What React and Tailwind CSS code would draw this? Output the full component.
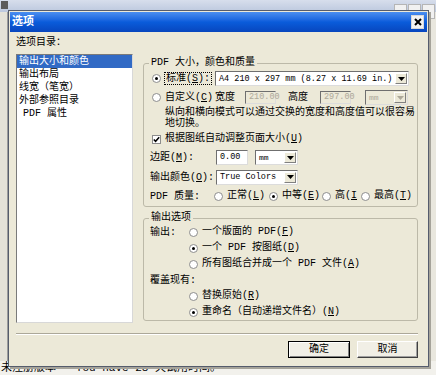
const FONT = "font-[family-name:'Liberation_Mono','Noto_Sans_CJK_SC',monospace]"

function Radio({ checked }) {
  return (
    <span className="flex h-[9px] w-[9px] shrink-0 items-center justify-center rounded-full border border-[#8d8d8d] bg-white">
      {checked && <span className="h-[3px] w-[3px] rounded-full bg-black" />}
    </span>
  )
}

function DropButton({ disabled }) {
  return (
    <span className="flex h-[11px] w-[12px] items-center justify-center border border-l-white border-t-white border-r-[#808080] border-b-[#808080] bg-[#ece9d8]">
      <svg width="7" height="4" viewBox="0 0 7 4">
        <polygon points="0,0 7,0 3.5,4" fill={disabled ? '#aca899' : '#000'} />
      </svg>
    </span>
  )
}

function Combo({ children, className = '', disabled, small }) {
  return (
    <div
      className={`flex h-[15px] items-center justify-between border border-l-[#6f6f6f] border-t-[#6f6f6f] border-r-[#dcdcdc] border-b-[#dcdcdc] pl-[3px] pr-[1px] ${
        disabled ? 'bg-[#ece9d8] text-[#aca899]' : 'bg-white'
      } ${className}`}
    >
      <span className={small ? 'text-[8.5px] leading-[12px]' : 'text-[8px] leading-[12px]'}>{children}</span>
      <DropButton disabled={disabled} />
    </div>
  )
}

function Input({ children, className = '', disabled }) {
  return (
    <div
      className={`flex items-center border border-l-[#6f6f6f] border-t-[#6f6f6f] border-r-[#dcdcdc] border-b-[#dcdcdc] pl-[3px] text-[8.5px] ${
        disabled ? 'bg-[#ece9d8] text-[#aca899]' : 'bg-white'
      } ${className}`}
    >
      {children}
    </div>
  )
}

function Option({ checked, children, className = '' }) {
  return (
    <div className={`flex items-center gap-[4px] ${className}`}>
      <Radio checked={checked} />
      <span className="whitespace-nowrap leading-[12px]">{children}</span>
    </div>
  )
}

export default function App() {
  return (
    <div className={`relative h-[375px] w-[436px] overflow-hidden bg-[#e9e7de] text-[10px] text-black ${FONT}`}>
      {/* window behind the dialog */}
      <div className="flex h-full flex-col">
        <div className="flex h-[12px] bg-gradient-to-b from-[#d7deec] to-[#bcc8de]">
          <span className="ml-[1px] mt-[1px] h-[8px] w-[7px] bg-[#5b5b5b]" />
        </div>
        <div className="flex flex-1">
          <div className="w-[8px] border-r border-[#9c9c9c] bg-[#e4e2d8]" />
          <div className="flex-1 bg-[#e9e7de]" />
        </div>
        <div className="h-[14px] bg-[#f2f1ec] pl-[1px] text-[11px] leading-[14px]">未注册版本 - You have 28 天试用时间。</div>
      </div>
      <div className="absolute right-[1px] top-[4px] flex gap-[1px]">
        <span className="h-[15px] w-[13px] border border-[#b5b5b5] bg-[#f1f1f1]" />
        <span className="h-[15px] w-[13px] border border-[#b5b5b5] bg-[#f1f1f1]" />
        <span className="h-[15px] w-[13px] border border-[#b5b5b5] bg-[#f1f1f1]" />
      </div>

      {/* dialog */}
      <div className="absolute left-[8px] top-[10px] flex h-[357px] w-[421px] flex-col border border-[#555c6c] bg-[#ece9d8] p-[1px] shadow-[2px_2px_0_#a5a39a]">
        <div className="flex h-[20px] items-center justify-between bg-gradient-to-b from-[#4a8ef0] via-[#0a5cdb] to-[#0846be] pl-[2px] pr-[3px]">
          <span className="text-[11px] font-bold leading-[14px] text-white">选项</span>
          <span className="flex h-[14px] w-[13px] items-center justify-center border border-[#d8d8d8] bg-[#f3f3f3]">
            <svg width="8" height="8" viewBox="0 0 8 8">
              <path d="M1 1L7 7M7 1L1 7" stroke="#000" strokeWidth="2" />
            </svg>
          </span>
        </div>

        <div className="flex flex-1 flex-col pl-[6px] pr-[9px] pt-[5px]">
          <div className="flex gap-[10px]">
            <div className="flex w-[117px] flex-col">
              <div className="h-[12px] leading-[12px]">选项目录：</div>
              <div className="mt-[5px] flex h-[269px] flex-col border border-l-[#7a7a7a] border-t-[#7a7a7a] border-r-[#d8d8d8] border-b-[#d8d8d8] bg-white">
                <div className="h-[13px] bg-[#316ac5] pl-[2px] leading-[13px] text-white">输出大小和颜色</div>
                <div className="h-[13px] pl-[2px] leading-[13px]">输出布局</div>
                <div className="h-[13px] pl-[2px] leading-[13px]">线宽（笔宽）</div>
                <div className="h-[13px] pl-[2px] leading-[13px]">外部参照目录</div>
                <div className="h-[13px] pl-[6px] leading-[13px]">PDF 属性</div>
              </div>
            </div>

            <div className="flex w-[275px] flex-col pt-[20px]">
              <fieldset className="rounded-[3px] border border-[#bcb9a8] pb-[2px]">
                <legend className="ml-[5px] px-[2px] leading-[12px]">PDF 大小，颜色和质量</legend>
                <div className="flex h-[19px] items-center">
                  <div className="flex w-[71px] items-center pl-[8px]">
                    <Radio checked />
                    <span className="ml-[3px] whitespace-nowrap border border-dotted border-black px-[1px] leading-[11px]">
                      标准(<u>S</u>):
                    </span>
                  </div>
                  <Combo className="w-[194px]" small>A4 210 x 297 mm (8.27 x 11.69 in.)</Combo>
                </div>
                <div className="flex h-[19px] items-center">
                  <div className="flex w-[71px] items-center pl-[8px]">
                    <Radio />
                    <span className="ml-[4px] whitespace-nowrap leading-[12px]">
                      自定义(<u>C</u>)
                    </span>
                  </div>
                  <span className="w-[20px] whitespace-nowrap">宽度</span>
                  <Input disabled className="ml-[10px] h-[13px] w-[31px]">210.00</Input>
                  <span className="ml-[12px] w-[20px] whitespace-nowrap">高度</span>
                  <Input disabled className="ml-[12px] h-[13px] w-[31px]">297.00</Input>
                  <Combo disabled className="ml-[14px] h-[13px] w-[43px]">mm</Combo>
                </div>
                <div className="ml-[21px] h-[22px] whitespace-nowrap leading-[11px]">
                  纵向和横向模式可以通过交换的宽度和高度值可以很容易
                  <br />
                  地切换。
                </div>
                <div className="flex h-[20px] items-center pl-[8px]">
                  <span className="flex h-[9px] w-[9px] items-center justify-center border border-[#8d8d8d] bg-white">
                    <svg width="7" height="7" viewBox="0 0 7 7">
                      <path d="M0.8 3.4L2.6 5.3L6.2 1.2" stroke="#000" strokeWidth="1.5" fill="none" />
                    </svg>
                  </span>
                  <span className="ml-[4px] whitespace-nowrap leading-[12px]">
                    根据图纸自动调整页面大小(<u>U</u>)
                  </span>
                </div>
                <div className="flex h-[17px] items-center">
                  <span className="w-[72px] whitespace-nowrap pl-[6px]">
                    边距(<u>M</u>):
                  </span>
                  <Input className="h-[15px] w-[32px]">0.00</Input>
                  <Combo className="ml-[7px] w-[43px]">mm</Combo>
                </div>
                <div className="flex h-[22px] items-center">
                  <span className="w-[72px] whitespace-nowrap pl-[6px]">
                    输出颜色(<u>O</u>):
                  </span>
                  <Combo className="w-[82px]" small>True Colors</Combo>
                </div>
                <div className="flex h-[16px] items-center">
                  <span className="w-[70px] whitespace-nowrap pl-[6px]">PDF 质量:</span>
                  <Option className="w-[55px]">
                    正常(<u>L</u>)
                  </Option>
                  <Option checked className="w-[53px]">
                    中等(<u>E</u>)
                  </Option>
                  <Option className="w-[39px]">
                    高(<u>I</u>
                  </Option>
                  <Option>
                    最高(<u>T</u>)
                  </Option>
                </div>
              </fieldset>

              <fieldset className="mt-[5px] rounded-[3px] border border-[#bcb9a8]">
                <legend className="ml-[5px] px-[2px] leading-[12px]">输出选项</legend>
                <div className="flex h-[16px] items-center">
                  <span className="w-[45px] pl-[6px]">输出:</span>
                  <Option>
                    一个版面的 PDF(<u>F</u>)
                  </Option>
                </div>
                <Option checked className="h-[16px] pl-[45px]">
                  一个 PDF 按图纸(<u>D</u>)
                </Option>
                <Option className="h-[16px] pl-[45px]">
                  所有图纸合并成一个 PDF 文件(<u>A</u>)
                </Option>
                <div className="flex h-[16px] items-center pl-[6px]">覆盖现有:</div>
                <Option className="h-[16px] pl-[45px]">
                  替换原始(<u>R</u>)
                </Option>
                <Option checked className="h-[16px] pl-[45px]">
                  重命名（自动递增文件名）(<u>N</u>)
                </Option>
              </fieldset>
            </div>
          </div>

          <div className="mt-[10px] h-px bg-[#aca899]" />
          <div className="h-px bg-white" />

          <div className="mt-[6px] flex justify-end gap-[7px]">
            <button className="h-[17px] w-[62px] border border-black bg-[#f1efe6] text-[10px] leading-[13px] shadow-[inset_1px_1px_0_white,inset_-1px_-1px_0_#808080]">
              确定
            </button>
            <button className="h-[17px] w-[61px] border border-l-white border-t-white border-r-[#404040] border-b-[#404040] bg-[#f1efe6] text-[10px] leading-[13px] shadow-[inset_-1px_-1px_0_#a0a0a0]">
              取消
            </button>
          </div>
        </div>
      </div>
    </div>
  )
}
